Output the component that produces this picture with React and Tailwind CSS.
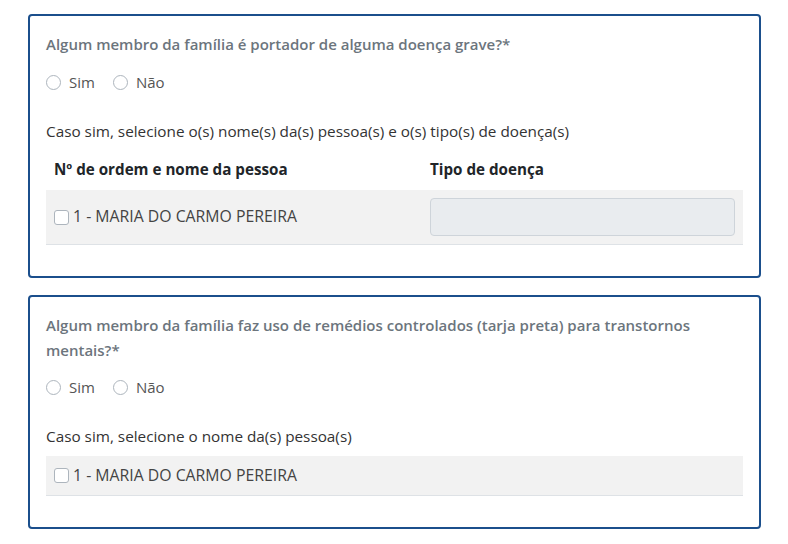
export default function App() {
  const Radio = ({ label }) => (
    <label className="flex items-center gap-[8px] text-[15px] text-[#555]">
      <span className="w-[15px] h-[15px] rounded-full border border-[#adb5bd] bg-white" />
      {label}
    </label>
  );
  const Check = () => (
    <span className="inline-block w-[15px] h-[15px] rounded-[3px] border border-[#adb5bd] bg-white" />
  );
  return (
    <div className="w-[788px] h-[544px] bg-white pt-[14px] px-[28px]" style={{ fontFamily: '"Open Sans", sans-serif' }}>
      <div className="w-[733px] border-2 border-[#1b4f8c] rounded-[4px] px-4 pt-[16px] pb-[31px]">
        <div className="text-[15px] font-semibold text-[#6c757d] leading-6">
          Algum membro da família é portador de alguma doença grave?*
        </div>
        <div className="flex gap-[18px] mt-[14px] leading-6">
          <Radio label="Sim" />
          <Radio label="Não" />
        </div>
        <div className="mt-[25px] text-[15.3px] text-[#333] leading-6">
          Caso sim, selecione o(s) nome(s) da(s) pessoa(s) e o(s) tipo(s) de doença(s)
        </div>
        <div className="grid grid-cols-[384px_1fr] mt-[14px] text-[15.2px] font-bold text-[#212529] leading-6">
          <div className="pl-2">Nº de ordem e nome da pessoa</div>
          <div>Tipo de doença</div>
        </div>
        <div className="grid grid-cols-[384px_1fr] items-center mt-[9px] h-[55px] bg-[#f2f2f2] border-b border-[#dee2e6] text-[15.8px] text-[#444]">
          <div className="flex items-center gap-[4px] pl-2">
            <Check />
            <span>1 - MARIA DO CARMO PEREIRA</span>
          </div>
          <div className="pr-2">
            <div className="h-[38px] bg-[#e9ecef] border border-[#ced4da] rounded-[4px]" />
          </div>
        </div>
      </div>

      <div className="w-[733px] mt-[17px] border-2 border-[#1b4f8c] rounded-[4px] px-4 pt-[16px] pb-[31px]">
        <div className="text-[15px] font-semibold text-[#6c757d] leading-[25px]">
          Algum membro da família faz uso de remédios controlados (tarja preta) para transtornos mentais?*
        </div>
        <div className="flex gap-[18px] mt-[12px] leading-6">
          <Radio label="Sim" />
          <Radio label="Não" />
        </div>
        <div className="mt-[25px] text-[15.3px] text-[#333] leading-6">
          Caso sim, selecione o nome da(s) pessoa(s)
        </div>
        <div className="flex items-center gap-[4px] mt-2 h-[40px] pl-2 bg-[#f2f2f2] border-b border-[#dee2e6] text-[15.8px] text-[#444]">
          <Check />
          <span>1 - MARIA DO CARMO PEREIRA</span>
        </div>
      </div>
    </div>
  );
}
